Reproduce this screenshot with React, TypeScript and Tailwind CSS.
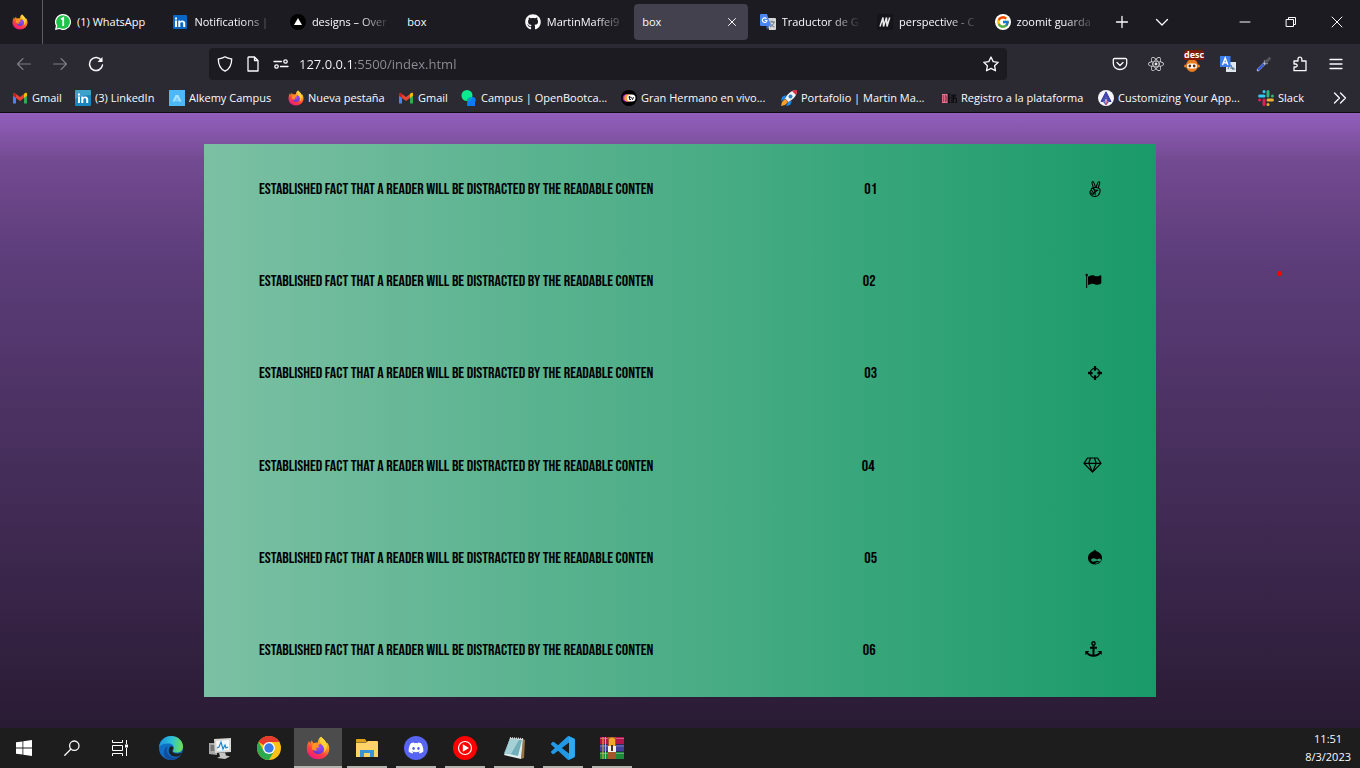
import React from "react";
import { FaAngellist, FaGithub, FaDiscord, FaReact } from "react-icons/fa";
import { FcGoogle } from "react-icons/fc";

type IconProps = { className?: string };

function Firefox({ className = "size-4" }: IconProps) {
  return (
    <svg viewBox="0 0 32 32" className={className} aria-hidden="true">
      <defs>
        <linearGradient id="fx-body" x1="0.8" y1="0" x2="0.25" y2="1">
          <stop offset="0" stopColor="#ffe14d" />
          <stop offset="0.35" stopColor="#ff9a1f" />
          <stop offset="0.65" stopColor="#ff4340" />
          <stop offset="1" stopColor="#f0128a" />
        </linearGradient>
        <radialGradient id="fx-core" cx="0.6" cy="0.3" r="0.8">
          <stop offset="0" stopColor="#a04bff" />
          <stop offset="1" stopColor="#5a34c4" />
        </radialGradient>
      </defs>
      <path
        d="M20 1c2 2.500 5 4 7 8 1.400 1.500 1 .5 1.200-.5C30.500 11.500 31 14.500 31 17c0 8-6.500 14-15 14S1 25 1 17c0-4 1-7.500 3-10.500L5.500 10l2-4.500 2.500 4c2-1 4-1.200 6-.8C15.600 5.500 17.500 2.500 20 1z"
        fill="url(#fx-body)"
      />
      <path d="M18.500 10.500c4 1 5.500 3.500 5.300 7-.3 4-3.600 6.500-7.500 6.500-4.300 0-7-3-7-6.500 2 1.200 4.500 1 6.500-.8-2-.2-4-.6-3.600-2.200 2.300 0 3.500-.4 4-1.500.8-.8 1.600-1.500 2.300-2.500z" fill="url(#fx-core)" />
      <path d="M9 10c2-.8 5-.7 7 .8-2 .4-2.300 1.300-1 2.200 1 .8 3 .2 2.500 1.200-.7 1.300-2.500 1.300-4 1.800-1.500.6-.3 2.200 1.800 2.500-3 2-6 .5-7.500-2z" fill="#ff9326" />
      <path d="M20 1c2 2.500 5 4 7 8 2 4.500.5 10-3 13 1.300-5-.3-8.500-2.800-10.800C18.500 8.500 18 4.500 20 1z" fill="#ffd83d" opacity=".85" />
    </svg>
  );
}

function WhatsApp() {
  return (
    <svg viewBox="0 0 16 16" className="size-4" aria-hidden="true">
      <path d="M8 0a8 8 0 1 1-3.700 15.100L0 16l.9-4.200A8 8 0 0 1 8 0z" fill="#fff" />
      <path d="M8 1.200a6.800 6.800 0 1 1-3.500 12.600l-2.900.8.700-2.900A6.800 6.800 0 0 1 8 1.200z" fill="#1fc24b" />
      <path d="M6 5.200 8.200 4v8" stroke="#fff" strokeWidth="1.800" fill="none" />
    </svg>
  );
}

function LinkedIn({ light = false }: { light?: boolean }) {
  return (
    <svg viewBox="0 0 16 16" className="size-4 shrink-0" aria-hidden="true">
      <rect x={light ? 0 : 1} y={light ? 0 : 1} width={light ? 16 : 14} height={light ? 16 : 14} rx="1" fill={light ? "#1688bd" : "#0a66c2"} />
      {light && <path d="M0 1a1 1 0 0 1 1-1h14a1 1 0 0 1 1 1v4C10 5 5 6 0 9z" fill="#5ab3d6" opacity=".6" />}
      <path d="M3 6.500h2V13H3zM3 3.500h2v2H3zM6.300 6.500h2v1c1-1.700 4.900-1.700 4.900 1.700V13h-2V9.600c0-1.900-2.900-1.900-2.900 0V13h-2z" fill="#fff" />
    </svg>
  );
}

function Triangle() {
  return (
    <svg viewBox="0 0 16 16" className="size-4" aria-hidden="true">
      <circle cx="8" cy="8" r="8" fill="#000" />
      <path d="m8 4 4 7H4z" fill="#fff" />
    </svg>
  );
}

function Translate({ className = "size-4" }: IconProps) {
  return (
    <svg viewBox="0 0 16 16" className={className} aria-hidden="true">
      <path d="M6 4h9a1 1 0 0 1 1 1v10a1 1 0 0 1-1 1H9z" fill="#d8d8d8" />
      <path d="M9 8h6M12 6.500V8m2 0c-.5 2.500-2 4-4 5m.5-3.500c1 2 2 3 4 3.500" stroke="#6b7785" fill="none" />
      <path d="M1 0h6l4 12H1a1 1 0 0 1-1-1V1a1 1 0 0 1 1-1z" fill="#4a86ee" />
      <path d="m9 12-2 4-1-4z" fill="#2c5fc9" />
      <path d="M6.500 4.700A2.300 2.300 0 1 0 7 6.500H4.800" stroke="#fff" strokeWidth="1.100" fill="none" />
    </svg>
  );
}

function LetterM() {
  return (
    <svg viewBox="0 0 16 16" className="size-4" aria-hidden="true">
      <rect width="16" height="16" fill="#15141a" />
      <path d="m3 12.500 3-9 .5 9 3-9 .5 9 2.700-9" stroke="#e8e8e8" strokeWidth="1.500" fill="none" />
    </svg>
  );
}

function Gmail() {
  return (
    <svg viewBox="0 0 16 16" className="size-4 shrink-0" aria-hidden="true">
      <path d="M1 4v9.500h3V7z" fill="#4285f4" />
      <path d="M12 7v6.500h3V4z" fill="#34a853" />
      <path d="M12 4v4l3-2.300V4c0-1.500-1.500-2-3 0z" fill="#fbbc04" />
      <path d="M4 4c-1.500-2-3-1.500-3 0v1.700L4 8z" fill="#c5221f" />
      <path d="M4 4v4l4 3 4-3V4L8 7z" fill="#ea4335" />
    </svg>
  );
}

function Alkemy() {
  return (
    <svg viewBox="0 0 16 16" className="size-4 shrink-0" aria-hidden="true">
      <rect width="16" height="16" fill="#4db8f5" />
      <path d="m3.500 11.500 3-6.500h3l3 6.500H10l-2-4-2 4z" fill="#a9e0ff" />
      <path d="m8 8 2 3.500H6z" fill="#7fcdfb" />
    </svg>
  );
}

function OpenBootcamp() {
  return (
    <svg viewBox="0 0 16 16" className="size-4 shrink-0" aria-hidden="true">
      <path d="M8 7h4a3 3 0 0 1 2 5v4H6v-4z" fill="#0a7bff" />
      <circle cx="6" cy="5.500" r="5.500" fill="#0bea8c" />
      <path d="M6 11c0-3 2-4 5.300-4A5.500 5.500 0 0 1 6 11z" fill="#079bb8" />
    </svg>
  );
}

function GranHermano() {
  return (
    <svg viewBox="0 0 16 16" className="size-4 shrink-0" aria-hidden="true">
      <circle cx="8" cy="8" r="8" fill="#000" />
      <circle cx="5.500" cy="8" r="3.800" fill="#a022e0" />
      <circle cx="7" cy="8" r="3.800" fill="#ff9d2e" />
      <rect x="6" y="4.500" width="8.500" height="7" rx="3.500" fill="#fff" />
      <path d="M8.500 6v3.500H10M7.500 7.200H10m.5 0 1 2.500 1-2.500" stroke="#222" fill="none" />
    </svg>
  );
}

function Rocket() {
  return (
    <svg viewBox="0 0 16 16" className="size-4 shrink-0" aria-hidden="true">
      <path d="M5 5 1 7l-1 4 4-2zM11 11l-2 4-4 1 2-4z" fill="#1a8be8" />
      <path d="m4 9 3 3-3 3-4 1 1-4z" fill="#ff9d2e" />
      <path d="M16 0c0 5-3 9-8.500 12L4 8.500C7 3 11 0 16 0z" fill="#eef2f6" />
      <path d="M16 0c0 2-.4 3.500-1 5l-4-4c1.500-.6 3-1 5-1z" fill="#e2263c" />
      <circle cx="9.500" cy="6.500" r="2" fill="#2b7fc4" />
    </svg>
  );
}

function Ideas() {
  return (
    <svg viewBox="0 0 16 16" className="size-4 shrink-0" aria-hidden="true">
      <rect x="1" y="4" width="5.500" height="9" fill="#e8768f" />
      <path d="M2.300 5v7M4.300 5.200v6.600c1.800 0 1.800-6.600 0-6.600z" stroke="#8c2440" strokeWidth=".8" fill="none" />
      <path d="M7.800 13V4h1.700m-1.700 4h1.500m-1.500 4.500h1.700M11 13V5h1.500v8M15.500 5H14v3.500h1.500v4H14" stroke="#0d0c10" strokeWidth="1.200" fill="none" />
    </svg>
  );
}

function AppStore() {
  return (
    <svg viewBox="0 0 16 16" className="size-4 shrink-0" aria-hidden="true">
      <circle cx="8" cy="8" r="8" fill="#f4f4fa" />
      <path d="M8 1.800 3 11.500h2L8 5l3 6.500h2z" fill="#4346b0" stroke="#3c3fa8" strokeLinejoin="round" />
      <path d="m8 7-2.200 5L8 14.500l2.200-2.500z" fill="#f4f4fa" stroke="#3c3fa8" strokeWidth="1.100" />
      <path d="M8 10.500V15" stroke="#d9475a" strokeWidth="1.400" />
    </svg>
  );
}

function Slack() {
  return (
    <svg viewBox="0 0 16 16" className="size-4 shrink-0" aria-hidden="true">
      <g strokeWidth="3" strokeLinecap="round" fill="none">
        <path d="M6 1.600v.1M1.600 6H6" stroke="#36c5f0" />
        <path d="M14.400 6v.1M10 1.600V6" stroke="#2eb67d" />
        <path d="M10 14.400v.1M10 10h4.400" stroke="#ecb22e" />
        <path d="M1.600 10v.1M6 10v4.400" stroke="#e01e5a" />
      </g>
    </svg>
  );
}

function Line({ d, className = "size-4", width = 1.3 }: { d: string; className?: string; width?: number }) {
  return (
    <svg viewBox="0 0 16 16" className={className} fill="none" stroke="currentColor" strokeWidth={width} strokeLinecap="round" strokeLinejoin="round" aria-hidden="true">
      <path d={d} />
    </svg>
  );
}

const tabs: { label: string; icon?: React.ReactNode; active?: boolean; fade?: boolean }[] = [
  { label: "(1) WhatsApp", icon: <WhatsApp /> },
  { label: "Notifications |", icon: <LinkedIn />, fade: true },
  { label: "designs – Over", icon: <Triangle />, fade: true },
  { label: "box" },
  { label: "MartinMaffei9", icon: <FaGithub className="size-4" />, fade: true },
  { label: "box", active: true },
  { label: "Traductor de G", icon: <Translate />, fade: true },
  { label: "perspective - C", icon: <LetterM />, fade: true },
  {
    label: "zoomit guarda",
    icon: (
      <span className="flex size-4 items-center justify-center rounded-full bg-white">
        <FcGoogle className="size-3.5" />
      </span>
    ),
    fade: true,
  },
];

const bookmarks: { label: string; icon: React.ReactNode; width: string }[] = [
  { label: "Gmail", icon: <Gmail />, width: "w-[63px]" },
  { label: "(3) LinkedIn", icon: <LinkedIn light />, width: "w-[94px]" },
  { label: "Alkemy Campus", icon: <Alkemy />, width: "w-[119px]" },
  { label: "Nueva pestaña", icon: <Firefox className="size-4 shrink-0" />, width: "w-[110px]" },
  { label: "Gmail", icon: <Gmail />, width: "w-[63px]" },
  { label: "Campus | OpenBootca...", icon: <OpenBootcamp />, width: "w-[160px]" },
  { label: "Gran Hermano en vivo...", icon: <GranHermano />, width: "w-[160px]" },
  { label: "Portafolio | Martin Ma...", icon: <Rocket />, width: "w-[160px]" },
  { label: "Registro a la plataforma", icon: <Ideas />, width: "w-[157px]" },
  { label: "Customizing Your App...", icon: <AppStore />, width: "w-[160px]" },
  { label: "Slack", icon: <Slack />, width: "w-[60px]" },
];

function TabStrip() {
  return (
    <div className="flex h-11 items-stretch bg-[#1c1b22]">
      <button aria-label="Firefox View" className="flex w-[43px] items-center border-r border-[#5b5b66] pl-3">
        <Firefox />
      </button>
      <div className="ml-0.5 flex max-w-[1057px] min-w-0 flex-1" role="tablist">
        {tabs.map((tab, i) => (
          <div key={i} className="min-w-0 flex-1 px-0.5 py-1">
            <button
              role="tab"
              aria-selected={!!tab.active}
              className={`flex h-full w-full items-center gap-1.5 rounded pr-1 pl-2 ${tab.active ? "bg-[#42414d]" : ""}`}
            >
              {tab.icon && <span className="shrink-0">{tab.icon}</span>}
              <span
                className={`min-w-0 flex-1 overflow-hidden text-left whitespace-nowrap ${
                  tab.fade ? "[mask-image:linear-gradient(90deg,#000_60%,transparent)]" : ""
                }`}
              >
                {tab.label}
              </span>
              {tab.active && <Line d="M4.500 4.500l7 7m0-7-7 7" className="mr-1 size-4 shrink-0" width={1} />}
            </button>
          </div>
        ))}
      </div>
      <div className="flex items-center">
        <button aria-label="New tab" className="flex w-10 justify-center"><Line d="M8 2.500v11M2.500 8h11" /></button>
        <button aria-label="List all tabs" className="flex w-10 justify-center"><Line d="m2.500 5.500 5.500 5.500 5.500-5.500" /></button>
      </div>
      <div className="ml-auto flex items-center">
        <button aria-label="Minimize" className="flex w-[46px] justify-center"><Line d="M3 8h10" width={1} /></button>
        <button aria-label="Restore" className="flex w-[46px] justify-center"><Line d="M3.500 5.500h7v7h-7zM5.500 5.500v-2h7v7h-2" width={1} /></button>
        <button aria-label="Close" className="flex w-[46px] justify-center"><Line d="m3 3 10 10M13 3 3 13" width={1} /></button>
      </div>
    </div>
  );
}

function Toolbar() {
  return (
    <div className="flex h-10 items-center">
      <div className="flex items-center pl-1.5">
        <button aria-label="Back" className="flex w-9 justify-center text-[#7d7c85]"><Line d="M14.500 8h-13M7 2.500 1.500 8 7 13.500" width={1.1} /></button>
        <button aria-label="Forward" className="flex w-9 justify-center text-[#7d7c85]"><Line d="M1.500 8h13M9 2.500 14.500 8 9 13.500" width={1.1} /></button>
        <button aria-label="Reload" className="flex w-9 justify-center">
          <svg viewBox="0 0 16 16" className="size-4" fill="none" stroke="currentColor" strokeWidth="1.500" aria-hidden="true">
            <path d="M13.500 4.500A6.500 6.500 0 1 0 14.500 9" strokeLinecap="round" />
            <path d="M14.500 1v5h-5z" fill="currentColor" stroke="none" />
          </svg>
        </button>
      </div>
      <div className="ml-[95px] flex h-8 min-w-0 flex-1 items-center rounded bg-[#1c1b22] px-2">
        <Line d="M8 .8C6 2.300 3.500 2.600 1.300 3c0 5.500 1.500 9.800 6.700 12.200C13.200 12.800 14.700 8.500 14.700 3 12.500 2.600 10 2.300 8 .8z" className="size-4 shrink-0" />
        <Line d="M3.500 1h6L13 4.500V15H3V1.500zM9.500 1v3.500H13" className="ml-3 size-4 shrink-0" />
        <svg viewBox="0 0 16 16" className="ml-3 size-4 shrink-0" fill="none" stroke="currentColor" strokeWidth="1.300" aria-hidden="true">
          <path d="M1 5.500h7.500M7.500 10.500H15" strokeLinecap="round" />
          <circle cx="12.500" cy="5.500" r="1.700" />
          <circle cx="3.500" cy="10.500" r="1.700" />
        </svg>
        <input
          aria-label="Address"
          defaultValue="127.0.0.1:5500/index.html"
          className="ml-2.5 h-full min-w-0 flex-1 bg-[linear-gradient(90deg,#fbfbfe_55px,#8f8f98_55px)] bg-clip-text text-[13px] text-transparent outline-none"
        />
        <button aria-label="Bookmark this page">
          <Line d="m8 1 2.200 4.600 5 .7-3.600 3.500.9 5L8 12.400l-4.500 2.400.9-5L.8 6.300l5-.7z" />
        </button>
      </div>
      <div className="ml-[95px] flex items-center pr-1.5">
        <button aria-label="Save to Pocket" className="flex w-9 justify-center"><Line d="M2.500 2.500h11a1.200 1.200 0 0 1 1.200 1.200V7.500a6.700 6 0 0 1-13.400 0V3.700a1.200 1.200 0 0 1 1.200-1.200zM5 6.500l3 3 3-3" /></button>
        <button aria-label="React Developer Tools" className="flex w-9 justify-center"><FaReact className="size-4 text-[#e6e6e8]" /></button>
        <button aria-label="Extension" className="relative flex w-9 justify-center">
          <svg viewBox="0 0 16 16" className="mt-1 size-4" aria-hidden="true">
            <ellipse cx="8" cy="7.500" rx="6" ry="6.500" fill="#e87b1e" />
            <circle cx="1.500" cy="8" r="1.500" fill="#e87b1e" />
            <circle cx="14.500" cy="8" r="1.500" fill="#e87b1e" />
            <rect x="3" y="5.500" width="10" height="5" rx="2.500" fill="#fff" />
            <circle cx="5.800" cy="8" r="1.400" fill="#6b2b0a" />
            <circle cx="10.200" cy="8" r="1.400" fill="#6b2b0a" />
          </svg>
          <span className="absolute -top-1 left-2.5 rounded-t-sm bg-[#7c1c07] text-[9px] leading-[10px] font-bold">desc</span>
        </button>
        <button aria-label="Translate" className="flex w-9 justify-center">
          <svg viewBox="0 0 16 16" className="size-4" aria-hidden="true">
            <rect x="6" y="6" width="10" height="10" fill="#dfe6ec" />
            <path d="M8 13c1-3 3-4 3-4l2 5M10 12h4v2" stroke="#55748a" fill="none" />
            <rect width="10.500" height="11" fill="#3b7ded" />
            <path d="m2.500 9 2.700-7 2.700 7M3.500 6.800h3.500" stroke="#fff" strokeWidth="1.400" fill="none" />
          </svg>
        </button>
        <button aria-label="Color picker" className="flex w-9 justify-center">
          <svg viewBox="0 0 16 16" className="size-4" aria-hidden="true">
            <path d="m2 14 7-7" stroke="#b9c6ee" strokeWidth="2.600" strokeLinecap="round" />
            <path d="m2.500 13.500 5-5" stroke="#2d52d8" strokeWidth="1.800" strokeLinecap="round" />
            <path d="m8 4.500 3.500 3.500" stroke="#9a9aa0" strokeWidth="1.500" />
            <path d="m10 6 3.500-3.500" stroke="#55555c" strokeWidth="3" strokeLinecap="round" />
          </svg>
        </button>
        <button aria-label="Extensions" className="flex w-9 justify-center"><Line d="M2 14.700V11h1.700a1.500 1.500 0 0 0 0-3H2V5h4V3a1.800 1.800 0 0 1 3.800 0v2H14v9.700z" /></button>
        <button aria-label="Menu" className="flex w-9 justify-center"><Line d="M2 3.500h12M2 8h12M2 12.500h12" /></button>
      </div>
    </div>
  );
}

function BookmarksBar() {
  return (
    <nav aria-label="Bookmarks" className="flex h-[29px] items-center border-b border-[#0c0c0d] pr-3 pl-3">
      {bookmarks.map((b, i) => (
        <a key={i} href="#" className={`flex shrink-0 items-center gap-1 whitespace-nowrap ${b.width}`}>
          {b.icon}
          <span>{b.label}</span>
        </a>
      ))}
      <button aria-label="More bookmarks" className="ml-auto"><Line d="m2.500 3 5 5-5 5M8.500 3l5 5-5 5" /></button>
    </nav>
  );
}

function FlagIcon() {
  return (
    <svg viewBox="0 0 17 16" className="h-4 w-[17px]" aria-hidden="true">
      <circle cx="1.700" cy="2" r="1.200" />
      <path d="M1.200 2h1v13h-1z" />
      <path d="M3 3.800C5 2.600 7.500 1.700 9.500 2.700c2 1 3.500.8 5.500-.3.700-.4 1.300-.2 1.300.5v7c0 .5-.2.700-.6.900-2 1.100-4 1.400-6 .4-2-1-4-.5-6.700 1z" />
    </svg>
  );
}

function CrosshairsIcon() {
  return (
    <svg viewBox="0 0 1536 1536" className="size-3.5" aria-hidden="true">
      <path d="M1197 896h-109q-26 0-45-19t-19-45v-128q0-26 19-45t45-19h109q-32-108-112.500-188.500t-188.500-112.500v109q0 26-19 45t-45 19h-128q-26 0-45-19t-19-45v-109q-108 32-188.500 112.500t-112.500 188.500h109q26 0 45 19t19 45v128q0 26-19 45t-45 19h-109q32 108 112.500 188.500t188.500 112.500v-109q0-26 19-45t45-19h128q26 0 45 19t19 45v109q108-32 188.500-112.500t112.500-188.500zm339-192v128q0 26-19 45t-45 19h-143q-37 161-154.500 278.500t-278.500 154.500v143q0 26-19 45t-45 19h-128q-26 0-45-19t-19-45v-143q-161-37-278.500-154.500t-154.500-278.500h-143q-26 0-45-19t-19-45v-128q0-26 19-45t45-19h143q37-161 154.500-278.500t278.500-154.500v-143q0-26 19-45t45-19h128q26 0 45 19t19 45v143q161 37 278.500 154.500t154.500 278.500h143q26 0 45 19t19 45z" />
    </svg>
  );
}

function DiamondIcon() {
  return (
    <svg viewBox="0 0 19 16" className="h-4 w-[19px]" fill="none" stroke="currentColor" strokeWidth="1.200" strokeLinejoin="round" aria-hidden="true">
      <path d="M4.500 1h10L18 6.300 9.500 15.200 1 6.300zM1 6.300h17M7.500 1 5.800 6.300l3.700 8.900 3.700-8.900L11.500 1" />
    </svg>
  );
}

function DropIcon() {
  return (
    <svg viewBox="0 0 14 16" className="h-4 w-3.5" aria-hidden="true">
      <path
        fillRule="evenodd"
        d="M6.800.5C7.300 1.800 8.800 2.300 10.500 3.200 12.700 4.400 14 6.200 14 8.800c0 4-3 6.700-7 6.700s-7-2.700-7-6.700c0-2.600 1.300-4.400 3.300-5.600C5 2.300 6.300 1.800 6.800.5zM5.800 9.200C4.200 9.200 3.200 10 3.200 11s.8 1.700 2.200 1.700c1.500 0 2.400-1 3.600-1 1.300 0 1.800.9 2.900.9.800 0 1.200-.6 1.200-1.500s-.6-1.700-1.700-1.700c-1.200 0-1.800.9-2.700.9S7.200 9.200 5.800 9.200zM7 14.200c1.300.5 2.700.3 3.800-.5-1-.8-2.800-.6-3.800.5z"
      />
    </svg>
  );
}

function AnchorIcon() {
  return (
    <svg viewBox="0 0 17 16" className="h-4 w-[17px]" fill="none" stroke="currentColor" aria-hidden="true">
      <circle cx="8.500" cy="2.400" r="1.600" strokeWidth="1.400" />
      <path d="M8.500 4v10.500M5 6.800h7" strokeWidth="2" />
      <path d="M1.800 11.500c1.200 2 3.800 3.200 6.700 3.200s5.500-1.200 6.700-3.200" strokeWidth="2" />
      <path d="M.3 10h4L.3 14zM16.700 10h-4l4 4z" fill="currentColor" stroke="none" />
    </svg>
  );
}

const rowText = "ESTABLISHED FACT THAT A READER WILL BE DISTRACTED BY THE READABLE CONTEN";

const rows: { number: string; icon: React.ReactNode }[] = [
  { number: "01", icon: <FaAngellist className="h-4 w-3.5" /> },
  { number: "02", icon: <FlagIcon /> },
  { number: "03", icon: <CrosshairsIcon /> },
  { number: "04", icon: <DiamondIcon /> },
  { number: "05", icon: <DropIcon /> },
  { number: "06", icon: <AnchorIcon /> },
];

function PageContent() {
  return (
    <main className="relative flex flex-1 items-center justify-center bg-[linear-gradient(180deg,#925fbc_0%,#724a90_8%,#5b3c78_25%,#2a1b34_100%)] py-[31px]">
      <ul className="grid w-[70%] grid-rows-6 self-stretch bg-[linear-gradient(90deg,#7cc0a4,#1a9a69)] pr-[54px] pl-[55px] font-['Bebas_Neue','Roboto',sans-serif] text-base text-black">
        {rows.map((row) => (
          <li key={row.number} className="flex items-center justify-between pb-[3px]">
            <span className="pt-[3px] whitespace-nowrap">{rowText}</span>
            <span className="pt-[3px]">{row.number}</span>
            {row.icon}
          </li>
        ))}
      </ul>
      <span className="absolute top-[158px] right-[78px] size-[5px] rounded-full bg-[#ff0000]" />
    </main>
  );
}

function Windows() {
  return (
    <svg viewBox="0 0 16 16" className="size-4" fill="#fff" aria-hidden="true">
      <path d="M0 2.300 6.500 1.400v6.200H0zM7.300 1.300 16 0v7.600H7.300zM0 8.400h6.500v6.200L0 13.700zM7.300 8.400H16V16l-8.700-1.200z" />
    </svg>
  );
}

function TaskView() {
  return (
    <svg viewBox="0 0 16 16" className="size-4" fill="none" stroke="#fff" aria-hidden="true">
      <path d="M.5 0v2.500h10V0M.5 5.500h10v5H.5zM.5 16v-2.500h10V16M14.500 0v4M14.500 8v8" />
      <rect x="13" y="4.500" width="3" height="3" fill="#fff" stroke="none" />
    </svg>
  );
}

function Edge() {
  return (
    <svg viewBox="0 0 24 24" className="size-6" aria-hidden="true">
      <defs>
        <linearGradient id="edge-top" x1="0" y1="0.4" x2="1" y2="0.5">
          <stop offset="0" stopColor="#1b8fdd" />
          <stop offset="0.5" stopColor="#2cc0d8" />
          <stop offset="1" stopColor="#6fe04f" />
        </linearGradient>
      </defs>
      <circle cx="12" cy="12" r="12" fill="#0f6fc4" />
      <path d="M0 11C1 4 6 0 12 0c7 0 12 5 12 10.500 0 4-3 6-6.500 6-3 0-4-1-3.300-2 1.500-2.500.8-6.500-4.200-7C5.500 7 1.500 9 0 11z" fill="url(#edge-top)" />
      <path d="M9 10c-2 3-1.500 9 4 11 4 1.500 7-.5 9.500-3.500C20 22 16 24 12 24 7 24 4 20 5 15c.5-2.500 2-4.500 4-5z" fill="#114f9c" />
      <path d="M14 11c1 1.500-1 3-.5 4.500s3 2.200 5.500 2c2.500-.3 4-1 4.300-.8-2 3.500-6 4.500-9.300 3.500-5-1.500-5.500-8-2-10.200z" fill="#1f1f1f" />
    </svg>
  );
}

function Monitor() {
  return (
    <svg viewBox="0 0 24 24" className="size-6" aria-hidden="true">
      <path d="M1 7h8v12l-8-1z" fill="#a9aaa7" />
      <path d="M2.500 9h4v6h-4z" fill="#747674" />
      <path d="m6 3 17-1v14l-16 1z" fill="#d8d8d5" />
      <path d="m8 5 13-1v10L9 15z" fill="#f4f8fb" />
      <path d="m9 12 2-1 2-5 2 7 2-4 1 3 2-1" stroke="#2686c8" strokeWidth="1.200" fill="none" />
      <path d="m11 17 6-.5 1 3 4 1-5 2.500-8-1 3-1.500z" fill="#c6c7c4" />
    </svg>
  );
}

function Chrome() {
  return (
    <svg viewBox="0 0 24 24" className="size-6" aria-hidden="true">
      <circle cx="12" cy="12" r="12" fill="#fbc116" />
      <path d="M12 12 1.600 6A12 12 0 0 1 22.400 6H12z" fill="#e33b2e" />
      <path d="M1.600 6A12 12 0 0 0 12 24l5.200-9-5.200 1-5.200-1z" fill="#2da94f" />
      <circle cx="12" cy="12" r="6" fill="#fff" />
      <circle cx="12" cy="12" r="4.700" fill="#3a7ae8" />
    </svg>
  );
}

function Folder() {
  return (
    <svg viewBox="0 0 24 24" className="size-6" aria-hidden="true">
      <path d="M1 4a1 1 0 0 1 1-1h8l2 3H1z" fill="#e0a01a" />
      <path d="M1 6.500h10l2-1.500h9a1 1 0 0 1 1 1v15H1z" fill="#ffd365" />
      <path d="M5 14h14v7h-4v-4H9v4H5z" fill="#3b93d6" />
    </svg>
  );
}

function YouTubeMusic() {
  return (
    <svg viewBox="0 0 24 24" className="size-6" aria-hidden="true">
      <circle cx="12" cy="12" r="12" fill="#f00" />
      <circle cx="12" cy="12" r="6.500" fill="none" stroke="#fff" strokeWidth="1.200" />
      <path d="m9.800 8.300 6.200 3.700-6.200 3.700z" fill="#fff" />
    </svg>
  );
}

function Notepad() {
  return (
    <svg viewBox="0 0 24 24" className="size-6" aria-hidden="true">
      <path d="m21 3 2 1-1 18-3 1z" fill="#9b7440" />
      <path d="m8 2 13 1-2 20-17-4z" fill="#e2eff0" />
      <path d="m8 3 12 1-4 16-14-3z" fill="#72afba" />
      <path d="m8 3 9 1L9 18l-6-1z" fill="#a5d1d6" />
      <path d="m8 2 13 1" stroke="#d6d8d8" strokeWidth="2" strokeDasharray="1 1" />
    </svg>
  );
}

function VSCode() {
  return (
    <svg viewBox="0 0 24 24" className="size-6" aria-hidden="true">
      <path
        fill="#2399e5"
        d="M23.150 2.587 18.210.21a1.494 1.494 0 0 0-1.705.29l-9.460 8.630-4.120-3.128a.999.999 0 0 0-1.276.057L.327 7.261A1 1 0 0 0 .326 8.740L3.899 12 .326 15.260a1 1 0 0 0 .001 1.479L1.650 17.940a.999.999 0 0 0 1.276.057l4.120-3.128 9.460 8.630a1.492 1.492 0 0 0 1.704.290l4.942-2.377A1.500 1.500 0 0 0 24 20.060V3.939a1.500 1.500 0 0 0-.850-1.352zm-5.146 14.861L10.826 12l7.178-5.448v10.896z"
      />
      <path d="M18 .3 23.500 3v18L18 23.700z" fill="#35b0f5" opacity=".7" />
    </svg>
  );
}

function WinRar() {
  return (
    <svg viewBox="0 0 24 24" className="size-6" aria-hidden="true">
      <rect y="1" width="24" height="7" fill="#b3154d" />
      <rect y="8.500" width="24" height="7" fill="#41419c" />
      <rect y="16" width="24" height="7" fill="#1d8a3a" />
      <path d="M0 2.500h24M0 10h24M0 17.500h24" stroke="#fff" strokeWidth=".6" opacity=".5" />
      <path d="M3 1v22M5.500 1v22" stroke="#e8b33a" strokeWidth="1" />
      <rect x="8" y="1" width="8" height="22" fill="#a5562b" />
      <path d="M9 3c2-2 4-2 6 0v8H9z" fill="#f0a52b" />
      <path d="M8 10h8v6H8z" fill="#f3f0e8" />
      <path d="M11 9h2v6h-2z" fill="#46362a" />
    </svg>
  );
}

const apps: { name: string; icon: React.ReactNode; state: "idle" | "open" | "active" }[] = [
  { name: "Microsoft Edge", icon: <Edge />, state: "idle" },
  { name: "Performance Monitor", icon: <Monitor />, state: "idle" },
  { name: "Google Chrome", icon: <Chrome />, state: "idle" },
  { name: "Firefox", icon: <Firefox className="size-6" />, state: "active" },
  { name: "File Explorer", icon: <Folder />, state: "open" },
  {
    name: "Discord",
    icon: (
      <span className="flex size-6 items-center justify-center rounded-full bg-[#5865f2]">
        <FaDiscord className="size-4 text-white" />
      </span>
    ),
    state: "open",
  },
  { name: "YouTube Music", icon: <YouTubeMusic />, state: "open" },
  { name: "Notepad", icon: <Notepad />, state: "open" },
  { name: "Visual Studio Code", icon: <VSCode />, state: "open" },
  { name: "WinRAR", icon: <WinRar />, state: "open" },
];

function Taskbar() {
  return (
    <footer className="flex h-10 items-stretch bg-[#1d1d1d]">
      <button aria-label="Start" className="flex w-12 items-center justify-center"><Windows /></button>
      <button aria-label="Search" className="flex w-12 items-center justify-center"><Line d="M10.300 1a4.700 4.700 0 1 1 0 9.400 4.700 4.700 0 0 1 0-9.400zM7 9 .8 15.200" /></button>
      <button aria-label="Task View" className="flex w-12 items-center justify-center"><TaskView /></button>
      <div className="ml-[3px] flex gap-px">
        {apps.map((app) => (
          <button
            key={app.name}
            aria-label={app.name}
            className={`flex w-12 flex-col items-center ${app.state === "active" ? "bg-[#4c4c4c]" : ""}`}
          >
            <span className="flex flex-1 items-center pt-0.5">{app.icon}</span>
            <span className={`h-0.5 ${app.state === "active" ? "w-full bg-[#b5b4b1]" : app.state === "open" ? "w-10 bg-[#b5b4b1]" : "w-10"}`} />
          </button>
        ))}
      </div>
      <div className="ml-auto flex flex-col items-center justify-center pr-[9px] leading-[18px]">
        <time>11:51</time>
        <time>8/3/2023</time>
      </div>
    </footer>
  );
}

export default function App() {
  return (
    <div className="flex min-h-screen flex-col font-['Open_Sans','Noto_Sans',sans-serif] text-[11px] text-[#fbfbfe]">
      <header className="bg-[#2b2a33]">
        <TabStrip />
        <Toolbar />
        <BookmarksBar />
      </header>
      <PageContent />
      <Taskbar />
    </div>
  );
}
